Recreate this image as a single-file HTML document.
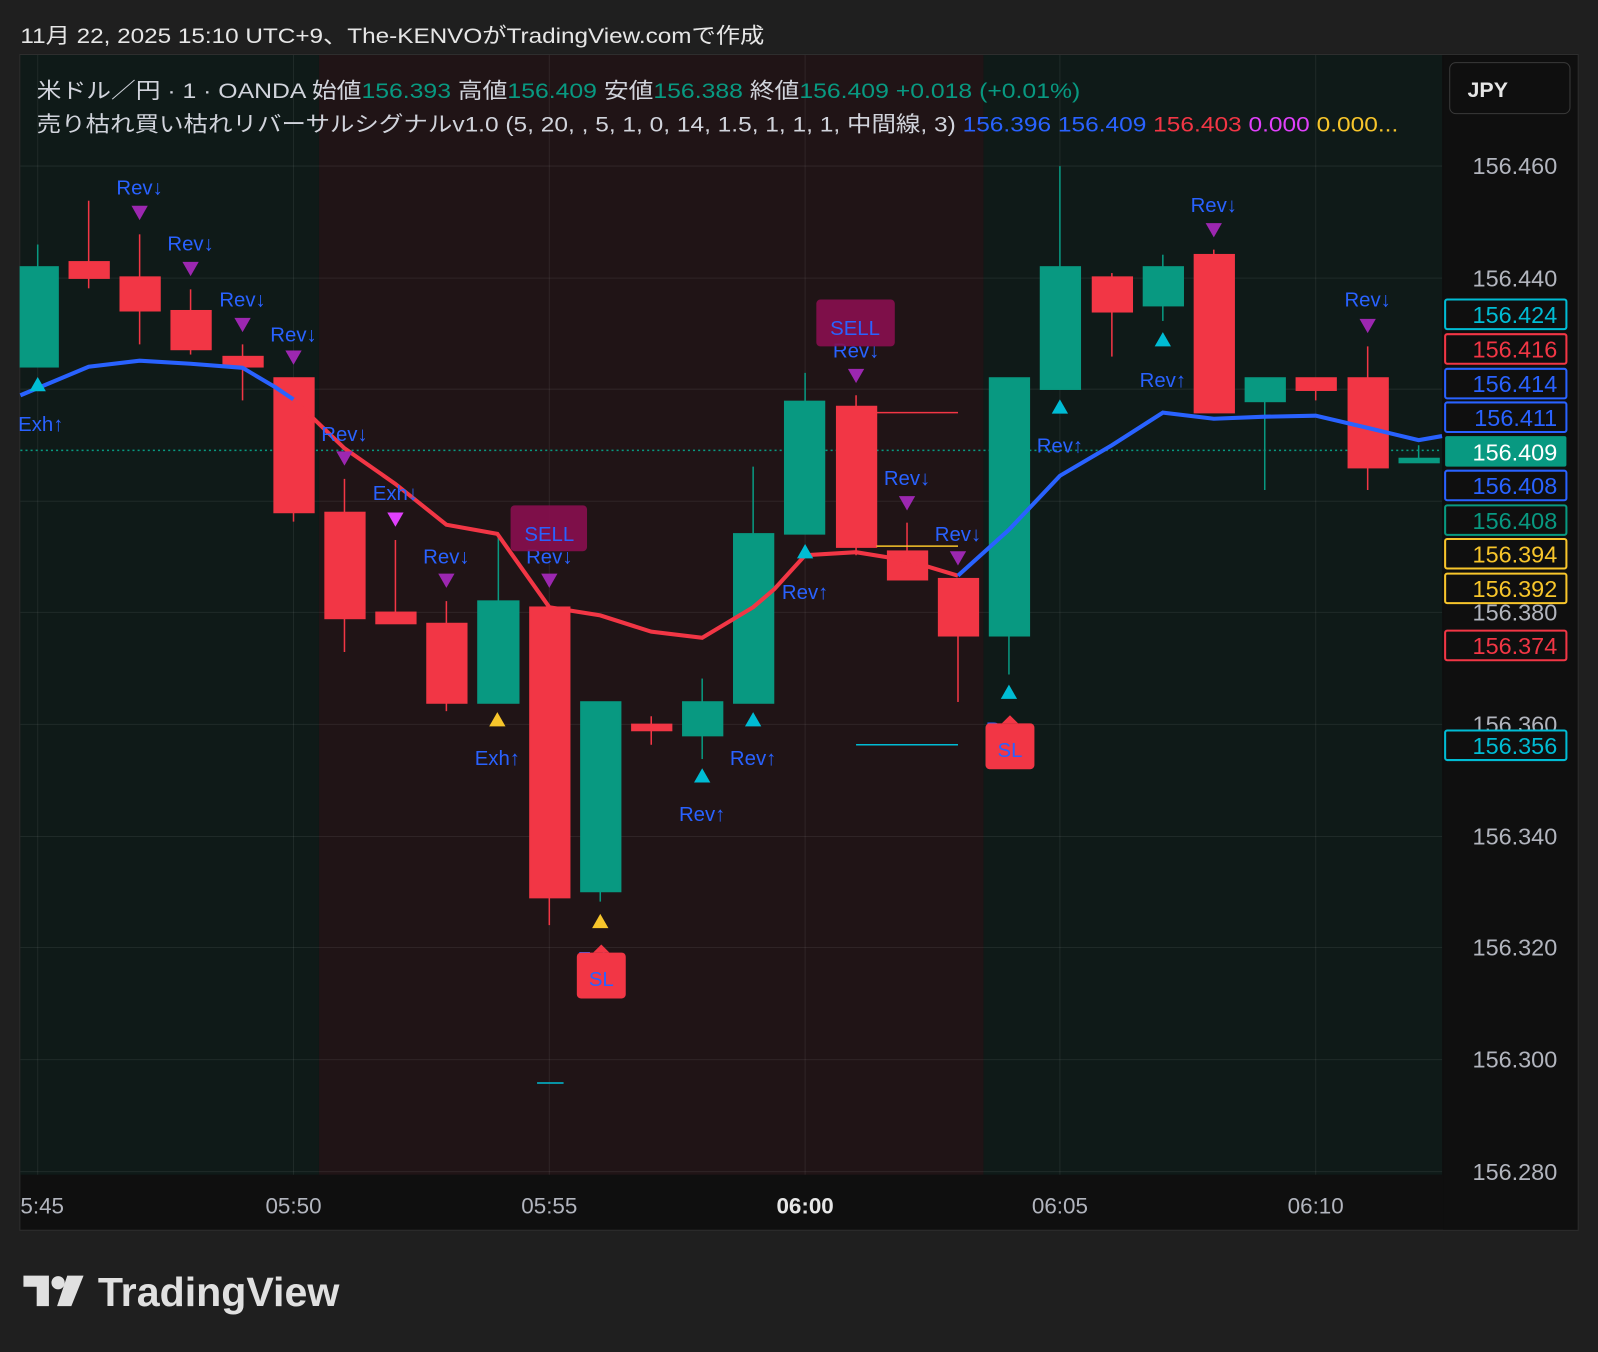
<!DOCTYPE html>
<html><head><meta charset="utf-8"><style>
html,body{margin:0;padding:0;background:#1f1f1f;width:1598px;height:1352px;overflow:hidden}
svg{display:block}
text{font-family:"Liberation Sans","Noto Sans CJK JP",sans-serif}
</style></head><body>
<svg width="1598" height="1352" viewBox="0 0 1568 1327" preserveAspectRatio="none" xmlns="http://www.w3.org/2000/svg">
<rect width="1568" height="1327" fill="#1f1f1f"/>
<text x="20" y="42" font-size="21" fill="#e6e6e6" textLength="730" lengthAdjust="spacingAndGlyphs">11月 22, 2025 15:10 UTC+9、The-KENVOがTradingView.comで作成</text>
<rect x="19.5" y="53.5" width="1529" height="1154" fill="#0f0f0f" stroke="#2e2e2e"/>
<rect x="20" y="54" width="293" height="1099" fill="#0f1a18"/>
<rect x="313" y="54" width="652" height="1099" fill="#201416"/>
<rect x="965" y="54" width="450" height="1099" fill="#0f1a18"/>
<g stroke="#ffffff" stroke-opacity="0.07" stroke-width="1">
<line x1="37" y1="54" x2="37" y2="1153"/><line x1="288" y1="54" x2="288" y2="1153"/><line x1="539" y1="54" x2="539" y2="1153"/><line x1="790" y1="54" x2="790" y2="1153"/><line x1="1040" y1="54" x2="1040" y2="1153"/><line x1="1291" y1="54" x2="1291" y2="1153"/>
<line x1="20" y1="163" x2="1415" y2="163"/><line x1="20" y1="273" x2="1415" y2="273"/><line x1="20" y1="382" x2="1415" y2="382"/><line x1="20" y1="492" x2="1415" y2="492"/><line x1="20" y1="601" x2="1415" y2="601"/><line x1="20" y1="711" x2="1415" y2="711"/><line x1="20" y1="821" x2="1415" y2="821"/><line x1="20" y1="930" x2="1415" y2="930"/><line x1="20" y1="1040" x2="1415" y2="1040"/><line x1="20" y1="1150" x2="1415" y2="1150"/>
</g>
<line x1="20" y1="442" x2="1415" y2="442" stroke="#089981" stroke-width="1.5" stroke-dasharray="2 3"/>
<g stroke-width="1.5">
<g fill="#089981" stroke="#089981">
<line x1="37" y1="240" x2="37" y2="360"/><rect x="20" y="262" width="37" height="98"/>
<line x1="489" y1="525" x2="489" y2="690"/><rect x="469" y="590" width="40" height="100"/>
<line x1="589" y1="689" x2="589" y2="885"/><rect x="570" y="689" width="39" height="186"/>
<line x1="689" y1="666" x2="689" y2="745"/><rect x="670" y="689" width="39" height="33"/>
<line x1="739" y1="458" x2="739" y2="690"/><rect x="720" y="524" width="39" height="166"/>
<line x1="790" y1="366" x2="790" y2="524"/><rect x="770" y="394" width="39" height="130"/>
<line x1="990" y1="371" x2="990" y2="662"/><rect x="971" y="371" width="39" height="253"/>
<line x1="1040" y1="163" x2="1040" y2="382"/><rect x="1021" y="262" width="39" height="120"/>
<line x1="1141" y1="250" x2="1141" y2="315"/><rect x="1122" y="262" width="39" height="38"/>
<line x1="1241" y1="371" x2="1241" y2="481"/><rect x="1222" y="371" width="39" height="23"/>
<line x1="1392" y1="437" x2="1392" y2="454"/><rect x="1373" y="450" width="39" height="4"/>
</g>
<g fill="#f23645" stroke="#f23645">
<line x1="87" y1="197" x2="87" y2="283"/><rect x="68" y="257" width="39" height="16"/>
<line x1="137" y1="230" x2="137" y2="338"/><rect x="118" y="272" width="39" height="33"/>
<line x1="187" y1="284" x2="187" y2="348"/><rect x="168" y="305" width="39" height="38"/>
<line x1="238" y1="338" x2="238" y2="393"/><rect x="219" y="350" width="39" height="10"/>
<line x1="288" y1="371" x2="288" y2="512"/><rect x="269" y="371" width="39" height="132"/>
<line x1="338" y1="470" x2="338" y2="640"/><rect x="319" y="503" width="39" height="104"/>
<line x1="388" y1="530" x2="388" y2="612"/><rect x="369" y="601" width="39" height="11"/>
<line x1="438" y1="590" x2="438" y2="698"/><rect x="419" y="612" width="39" height="78"/>
<line x1="539" y1="596" x2="539" y2="908"/><rect x="520" y="596" width="39" height="285"/>
<line x1="639" y1="703" x2="639" y2="731"/><rect x="620" y="711" width="39" height="6"/>
<line x1="840" y1="388" x2="840" y2="545"/><rect x="821" y="399" width="39" height="138"/>
<line x1="890" y1="513" x2="890" y2="569"/><rect x="871" y="541" width="39" height="28"/>
<line x1="940" y1="568" x2="940" y2="689"/><rect x="921" y="568" width="39" height="56"/>
<line x1="1091" y1="268" x2="1091" y2="350"/><rect x="1072" y="272" width="39" height="34"/>
<line x1="1191" y1="245" x2="1191" y2="405"/><rect x="1172" y="250" width="39" height="155"/>
<line x1="1291" y1="371" x2="1291" y2="393"/><rect x="1272" y="371" width="39" height="12"/>
<line x1="1342" y1="340" x2="1342" y2="481"/><rect x="1323" y="371" width="39" height="88"/>
</g></g>
<line x1="860" y1="405" x2="940" y2="405" stroke="#f23645" stroke-width="1.5"/>
<line x1="860" y1="536" x2="940" y2="536" stroke="#f7c52b" stroke-width="1.5"/>
<line x1="840" y1="731" x2="940" y2="731" stroke="#00bcd4" stroke-width="1.5"/>
<line x1="527" y1="1063" x2="553" y2="1063" stroke="#00bcd4" stroke-width="1.5"/>
<polyline fill="none" stroke="#2962ff" stroke-width="4" points="20,388 87,360 137,354 187,357 238,361 270,380 288,392"/>
<polyline fill="none" stroke="#f23645" stroke-width="4" points="288,392 338,440 388,475 438,515 488,524 539,596 589,604 639,620 689,626 739,596 760,578 790,545 840,542 890,550 940,565"/>
<polyline fill="none" stroke="#2962ff" stroke-width="4" points="940,565 990,520 1040,467 1091,437 1141,405 1191,411 1241,409 1291,408 1342,420 1392,432 1415,428"/>
<g fill="#9c27b0">
<polygon points="129,202 145,202 137,216"/><polygon points="179,257 195,257 187,271"/><polygon points="230,312 246,312 238,326"/><polygon points="280,344 296,344 288,358"/><polygon points="330,443 346,443 338,457"/><polygon points="430,563 446,563 438,577"/><polygon points="531,563 547,563 539,577"/><polygon points="832,362 848,362 840,376"/><polygon points="882,487 898,487 890,501"/><polygon points="932,541 948,541 940,555"/><polygon points="1183,219 1199,219 1191,233"/><polygon points="1334,313 1350,313 1342,327"/>
</g>
<polygon points="380,503 396,503 388,517" fill="#e040fb"/>
<g fill="#00bcd4">
<polygon points="29,384 45,384 37,370"/><polygon points="681,768 697,768 689,754"/><polygon points="731,713 747,713 739,699"/><polygon points="782,548 798,548 790,534"/><polygon points="982,686 998,686 990,672"/><polygon points="1032,406 1048,406 1040,392"/><polygon points="1133,340 1149,340 1141,326"/>
</g>
<g fill="#f7c52b"><polygon points="480,713 496,713 488,699"/><polygon points="581,911 597,911 589,897"/></g>
<g font-size="20" fill="#2962ff" text-anchor="middle">
<text x="137" y="191">Rev↓</text><text x="187" y="246">Rev↓</text><text x="238" y="301">Rev↓</text><text x="288" y="335">Rev↓</text><text x="338" y="433">Rev↓</text><text x="388" y="491">Exh↓</text><text x="438" y="553">Rev↓</text><text x="539" y="553">Rev↓</text><text x="840" y="351">Rev↓</text><text x="890" y="476">Rev↓</text><text x="940" y="531">Rev↓</text><text x="1191" y="208">Rev↓</text><text x="1342" y="301">Rev↓</text>
<text x="40" y="423">Exh↑</text><text x="488" y="751">Exh↑</text><text x="689" y="806">Rev↑</text><text x="739" y="751">Rev↑</text><text x="790" y="588">Rev↑</text><text x="1040" y="444">Rev↑</text><text x="1141" y="380">Rev↑</text><text x="589" y="948">Exh↑</text><text x="990" y="723">Rev↑</text>
</g>
<rect x="501" y="496" width="75" height="45" rx="4" fill="#880e4f" opacity="0.9"/><text x="539" y="531" font-size="20" fill="#2962ff" text-anchor="middle">SELL</text>
<rect x="801" y="294" width="77" height="46" rx="4" fill="#880e4f" opacity="0.9"/><text x="839" y="329" font-size="20" fill="#2962ff" text-anchor="middle">SELL</text>
<rect x="566" y="935" width="48" height="45" rx="4" fill="#f23645"/><polygon points="582,935 598,935 590,927" fill="#f23645"/><text x="590" y="968" font-size="20" fill="#2962ff" text-anchor="middle">SL</text>
<rect x="967" y="710" width="48" height="45" rx="4" fill="#f23645"/><polygon points="983,710 999,710 991,702" fill="#f23645"/><text x="991" y="743" font-size="20" fill="#2962ff" text-anchor="middle">SL</text>
<text x="36" y="96" font-size="21" fill="#d1d4dc" textLength="1024" lengthAdjust="spacingAndGlyphs">米ドル／円 · 1 · OANDA  始値<tspan fill="#089981">156.393</tspan>  高値<tspan fill="#089981">156.409</tspan>  安値<tspan fill="#089981">156.388</tspan>  終値<tspan fill="#089981">156.409  +0.018 (+0.01%)</tspan></text>
<text x="36" y="129" font-size="21" fill="#d1d4dc" textLength="1336" lengthAdjust="spacingAndGlyphs">売り枯れ買い枯れリバーサルシグナルv1.0 (5, 20, , 5, 1, 0, 14, 1.5, 1, 1, 1, 中間線, 3)  <tspan fill="#2962ff">156.396  156.409</tspan>  <tspan fill="#f23645">156.403</tspan>  <tspan fill="#e040fb">0.000</tspan>  <tspan fill="#f7c52b">0.000...</tspan></text>
<rect x="1416" y="54" width="132" height="1153" fill="#0f0f0f"/>
<rect x="1422.5" y="61.5" width="118" height="50" rx="6" fill="#0f0f0f" stroke="#3a3a3a"/>
<text x="1440" y="95" font-size="21" font-weight="bold" fill="#e6e6e6">JPY</text>
<g font-size="23" fill="#b2b5be" text-anchor="end">
<text x="1528" y="171">156.460</text><text x="1528" y="281">156.440</text><text x="1528" y="609">156.380</text><text x="1528" y="719">156.360</text><text x="1528" y="829">156.340</text><text x="1528" y="938">156.320</text><text x="1528" y="1048">156.300</text><text x="1528" y="1158">156.280</text>
</g>
<g font-size="23" text-anchor="end" stroke-width="2">
<rect x="1418" y="294" width="119" height="29" rx="2" fill="#0f0f0f" stroke="#00bcd4"/><text x="1528" y="317" fill="#00bcd4">156.424</text>
<rect x="1418" y="328" width="119" height="29" rx="2" fill="#0f0f0f" stroke="#f23645"/><text x="1528" y="351" fill="#f23645">156.416</text>
<rect x="1418" y="362" width="119" height="29" rx="2" fill="#0f0f0f" stroke="#2962ff"/><text x="1528" y="385" fill="#2962ff">156.414</text>
<rect x="1418" y="395" width="119" height="29" rx="2" fill="#0f0f0f" stroke="#2962ff"/><text x="1528" y="418" fill="#2962ff">156.411</text>
<rect x="1418" y="428" width="119" height="30" rx="2" fill="#089981"/><text x="1528" y="452" fill="#ffffff">156.409</text>
<rect x="1418" y="462" width="119" height="29" rx="2" fill="#0f0f0f" stroke="#2962ff"/><text x="1528" y="485" fill="#2962ff">156.408</text>
<rect x="1418" y="496" width="119" height="29" rx="2" fill="#0f0f0f" stroke="#089981"/><text x="1528" y="519" fill="#089981">156.408</text>
<rect x="1418" y="529" width="119" height="29" rx="2" fill="#0f0f0f" stroke="#f7c52b"/><text x="1528" y="552" fill="#f7c52b">156.394</text>
<rect x="1418" y="563" width="119" height="29" rx="2" fill="#0f0f0f" stroke="#f7c52b"/><text x="1528" y="586" fill="#f7c52b">156.392</text>
<rect x="1418" y="619" width="119" height="29" rx="2" fill="#0f0f0f" stroke="#f23645"/><text x="1528" y="642" fill="#f23645">156.374</text>
<rect x="1418" y="717" width="119" height="29" rx="2" fill="#0f0f0f" stroke="#00bcd4"/><text x="1528" y="740" fill="#00bcd4">156.356</text>
</g>
<g font-size="22" fill="#b2b5be" text-anchor="middle">
<text x="20" y="1191" text-anchor="start">5:45</text><text x="288" y="1191">05:50</text><text x="539" y="1191">05:55</text><text x="790" y="1191" font-weight="bold" fill="#e6e6e6">06:00</text><text x="1040" y="1191">06:05</text><text x="1291" y="1191">06:10</text>
</g>
<g fill="#e0e0e0">
<path d="M23,1252 H48 V1282 H36 V1263 H23 Z"/>
<circle cx="57" cy="1259" r="6.5"/>
<path d="M66,1252 H82 L70,1282 H56 Z"/>
<text x="96" y="1282" font-size="40" font-weight="bold" textLength="237" lengthAdjust="spacingAndGlyphs">TradingView</text>
</g>
</svg>
</body></html>
